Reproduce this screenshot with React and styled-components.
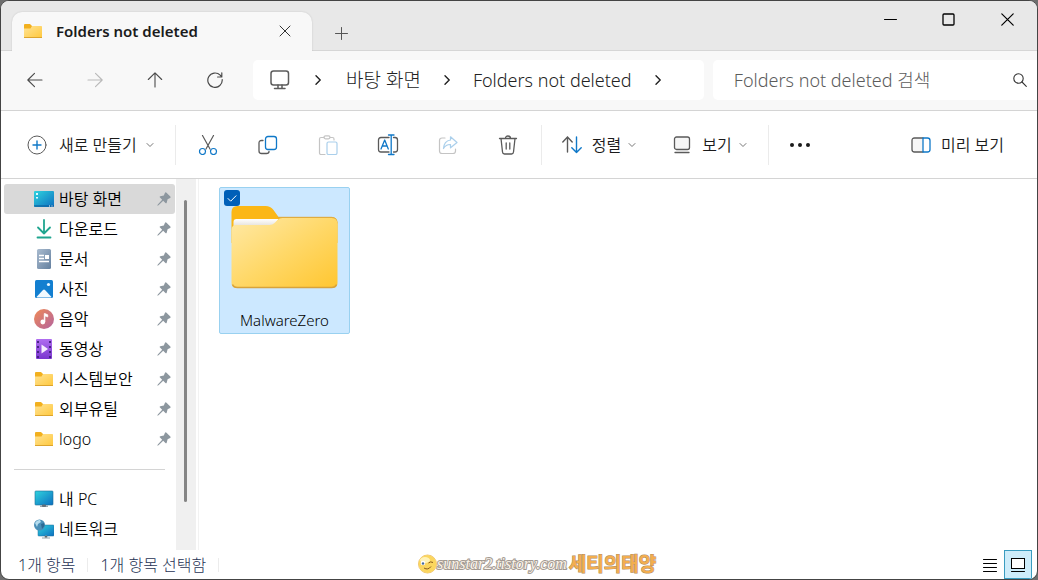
import { useState } from 'react'
import styled, { createGlobalStyle, css } from 'styled-components'

const GlobalStyle = createGlobalStyle`
    * {
        box-sizing: border-box;
    }

    body {
        margin: 0;
        background: #6e6e6e;
        color: #1b1b1b;
        font-family: 'Noto Sans', 'Noto Sans CJK KR', sans-serif;
        font-size: 15px;
        line-height: 20px;
    }

    button, input {
        font: inherit;
        color: inherit;
    }

    button {
        border: 0;
        padding: 0;
        background: none;
    }

    svg {
        display: block;
        flex: none;
    }
`

const Window = styled.div`
    display: flex;
    flex-direction: column;
    min-height: 100vh;
    border: 1px solid #444;
    border-radius: 9px;
    overflow: hidden;
    background: #fff;
`

/* title bar */

const TitleBar = styled.header`
    display: flex;
    align-items: stretch;
    height: 50px;
    padding-left: 11px;
    background: #e8e8e8;
    box-shadow: inset 0 -1px #d6d6d6;
`

const Tab = styled.div`
    display: flex;
    align-items: center;
    width: 300px;
    height: 39px;
    margin-top: 11px;
    padding: 0 18px 2px 11px;
    border-radius: 10px 10px 0 0;
    background: #f8f8f8;
    box-shadow: 0 0 2px rgba(0, 0, 0, 0.15);
    clip-path: inset(-2px -2px 0 -2px);
`

const TabTitle = styled.h1`
    flex: 1;
    margin: 0 0 0 13px;
    font-size: 15px;
    line-height: 20px;
    font-weight: 600;
`

const TitleButton = styled.button`
    display: grid;
    place-items: center;
    width: ${props => props.$width}px;
    height: 36px;
`

const NewTab = styled(TitleButton)`
    align-self: flex-end;
    margin-left: 11px;
`

const WindowButtons = styled.div`
    display: flex;
    margin-left: auto;
`

/* navigation bar */

const NavBar = styled.nav`
    display: flex;
    align-items: center;
    height: 60px;
    padding: 0 0 2px 4px;
    background: #f8f8f8;
    border-bottom: 1px solid #d4d4d4;
`

const NavButton = styled.button`
    display: grid;
    place-items: center;
    width: 60px;
    height: 40px;
    color: ${props => props.disabled ? '#b9b9b9' : '#4a4a4a'};
`

const Address = styled.div`
    display: flex;
    align-items: center;
    flex: 435 1 0;
    height: 40px;
    margin: 0 9px 0 8px;
    padding-left: 17px;
    border-radius: 5px;
    background: #fff;
    color: #222;
`

const Crumb = styled.a`
    color: inherit;
    text-decoration: none;
    font-size: ${props => props.$size || 18}px;
    line-height: 24px;
    font-weight: 300;
    white-space: nowrap;
`

const Chevron = styled.span`
    display: grid;
    place-items: center;
    width: ${props => props.$width || 52}px;
`

const Search = styled.label`
    display: flex;
    align-items: center;
    flex: 294 1 0;
    height: 40px;
    padding: 0 10px 0 21px;
    border-radius: 5px 0 0 5px;
    background: #fff;

    input {
        flex: 1;
        min-width: 0;
        padding: 0;
        border: 0;
        outline: 0;
        background: none;
        font-size: 18px;
        line-height: 24px;
        font-weight: 300;
    }

    input::placeholder {
        color: #5c5c5c;
        opacity: 1;
    }
`

/* command bar */

const CommandBar = styled.div`
    display: flex;
    align-items: center;
    height: 68px;
    padding: 0 33px 0 26px;
    border-bottom: 1px solid #d4d4d4;
`

const Command = styled.button`
    display: flex;
    align-items: center;
    gap: ${props => props.$gap || 10}px;
    height: 40px;
    font-weight: 350;
    white-space: nowrap;
    font-size: 16px;

    svg:last-child:not(:first-child) {
        margin-left: -3px;
    }
`

const IconCommand = styled.button`
    display: grid;
    place-items: center;
    width: 60px;
    height: 40px;
    opacity: ${props => props.disabled ? 0.35 : 1};
`

const Separator = styled.span`
    width: 1px;
    height: 40px;
    margin: ${props => props.$margin};
    background: #ebebeb;
`

const Spacer = styled.span`
    flex: 1;
`

const CommandGroup = styled.div`
    display: flex;
    gap: 36px;
`

/* body */

const Body = styled.div`
    display: flex;
    flex: 1;
`

const Sidebar = styled.aside`
    display: flex;
    width: 198px;
    border-right: 1px solid #f2f2f2;
`

const Places = styled.ul`
    flex: 1;
    margin: 0;
    padding: 5px 1px 5px 3px;
    list-style: none;
`

const Place = styled.a`
    display: flex;
    align-items: center;
    height: 30px;
    padding: 0 4px 0 30px;
    border-radius: 3px;
    color: #000;
    text-decoration: none;
    font-size: 16px;

    ${props => props.$selected && css`
        background: #d9d9d9;
    `}

    span {
        flex: 1;
        margin-left: 5px;
        font-weight: 350;
    }
`

const Divider = styled.li`
    height: 1px;
    margin: 15px 10px 14px;
    background: #d4d4d4;
`

const ScrollTrack = styled.div`
    width: 20px;
    margin-right: 2px;
    padding: 21px 0 48px 8px;
    background: #f0f0f0;
`

const ScrollThumb = styled.div`
    width: 3px;
    height: 100%;
    border-radius: 2px;
    background: #858585;
`

const Files = styled.main`
    flex: 1;
    padding: 8px 20px;
`

const Tile = styled.label`
    position: relative;
    display: flex;
    flex-direction: column;
    align-items: center;
    width: 131px;
    height: 147px;
    padding-top: 17px;
    border: 1px solid #99d1f0;
    border-radius: 2px;
    background: #cce8ff;
`

const TileName = styled.span`
    margin-top: 21px;
    font-size: 15px;
    font-weight: 350;
    color: #000;
`

const TileCheck = styled.span`
    position: absolute;
    top: 2px;
    left: 4px;
    display: grid;

    input {
        appearance: none;
        grid-area: 1 / 1;
        width: 16px;
        height: 16px;
        margin: 0;
        border-radius: 3px;
        background: #005fb8;
    }

    svg {
        grid-area: 1 / 1;
        pointer-events: none;
    }
`

/* status bar */

const StatusBar = styled.footer`
    position: relative;
    display: flex;
    align-items: center;
    height: 29px;
    padding: 0 5px 0 17px;
    color: #1f3354;
    font-size: 16px;
    font-weight: 300;
`

const StatusLine = styled.span`
    width: 1px;
    height: 14px;
    margin: 0 12px;
    background: #ececec;
`

const ViewButton = styled.button`
    display: grid;
    place-items: center;
    width: 28px;
    height: 29px;

    ${props => props.$active && css`
        border: 1px solid #3a9cc0;
        background: #cdecfa;
    `}
`

const Signature = styled.div`
    position: absolute;
    top: 4px;
    left: 416px;
    display: flex;
    align-items: center;
    height: 20px;
    white-space: nowrap;
    paint-order: stroke fill;
`

const SiteName = styled.em`
    font-family: 'Liberation Serif', serif;
    font-size: 16px;
    font-weight: 400;
    color: #fbf3e8;
    -webkit-text-stroke: 2px #a39a92;
`

const Nickname = styled.strong`
    margin-left: 2px;
    font-size: 19px;
    font-weight: 700;
    color: #f3ae4e;
    -webkit-text-stroke: 1px #b08a60;
`

/* icons */

function Stroke({ size = 20, width = 1, children, ...rest }) {
    return (
        <svg width={size} height={size} viewBox={`0 0 ${size} ${size}`} fill='none' stroke='currentColor'
            strokeWidth={width} strokeLinecap='round' strokeLinejoin='round' aria-hidden='true' {...rest}>
            {children}
        </svg>
    )
}

const GRAY = '#5a5a5a'
const BLUE = '#0f78c8'

const ChevronRight = () => <Stroke size={10} width={1.4}><path d='M3 .8 7.2 5 3 9.2' /></Stroke>
const ChevronDown = () => <Stroke size={8} stroke='#777'><path d='M1 2.500 4 5.500 7 2.500' /></Stroke>

function SmallFolder() {
    return (
        <svg width='20' height='20' viewBox='0 0 20 20' aria-hidden='true'>
            <defs>
                <linearGradient id='smallFolder' x1='0' y1='0' x2='1' y2='1'>
                    <stop offset='0' stopColor='#ffe395' />
                    <stop offset='1' stopColor='#ffc83c' />
                </linearGradient>
            </defs>
            <path d='M1 4a1 1 0 0 1 1-1h5l2 2v3H1z' fill='#f2b01e' />
            <path d='M1 7.500h6.500L9 5h9.200q.8 0 .8.8v10.400q0 .8-.8.8H1.800q-.8 0-.8-.8z' fill='url(#smallFolder)' />
            <path d='M1 16.500h18' stroke='#dca42e' />
        </svg>
    )
}

function LargeFolder() {
    return (
        <svg width='107' height='84' viewBox='0 0 106 84' aria-hidden='true'>
            <defs>
                <linearGradient id='folderFront' x1='0' y1='0' x2='1' y2='1'>
                    <stop offset='0' stopColor='#ffe9a6' />
                    <stop offset='.5' stopColor='#ffd868' />
                    <stop offset='1' stopColor='#ffc630' />
                </linearGradient>
                <linearGradient id='folderPaper' x1='0' y1='0' x2='0' y2='1'>
                    <stop offset='0' stopColor='#fff' />
                    <stop offset='1' stopColor='#ded9d0' />
                </linearGradient>
            </defs>
            <path d='M0 7q0-6 6-6h28q5 0 8 4l5 7h53q6 0 6 6v20H0z' fill='#fbb716' />
            <path d='M46 12.300h54q5.500 0 5.500 6' stroke='#d9a94c' fill='none' />
            <path d='M2 17q0-3 3-3h42l-6 9H2z' fill='url(#folderPaper)' />
            <path d='M0 25q0-5 5-5h33q3 0 5-2l3-3q2-2 5-2h49q6 0 6 6v59q0 5-6 5H6q-6 0-6-5z' fill='url(#folderFront)' />
            <path d='M1 79.500q1 3 5 3h94q4 0 5-3' stroke='#d8a33b' strokeWidth='1.500' fill='none' />
        </svg>
    )
}

const Monitor = ({ children }) => (
    <svg width='20' height='20' viewBox='0 0 20 20' aria-hidden='true'>
        <defs>
            <linearGradient id='screen' x1='0' y1='0' x2='1' y2='1'>
                <stop offset='0' stopColor='#2fd3de' />
                <stop offset='1' stopColor='#0d6fc0' />
            </linearGradient>
        </defs>
        {children}
    </svg>
)

const placeIcons = {
    desktop: (
        <Monitor>
            <rect x='0' y='2' width='20' height='16' rx='1' fill='url(#screen)' />
            <path d='M2 4h2v2H2zM2 8h2v1.500H2z' fill='#dffbff' />
            <path d='M0 16h20v1q0 1-1 1H1q-1 0-1-1z' fill='#0b5f9c' opacity='.6' />
            <path d='M15 17h1M17.500 17h1' stroke='#fff' />
        </Monitor>
    ),
    downloads: (
        <Stroke width={1.8} stroke='#1fa58f'>
            <path d='M10 1v13.500M4 8.500l6 6 6-6M3.500 18.500h13' />
        </Stroke>
    ),
    documents: (
        <svg width='20' height='20' viewBox='0 0 20 20' aria-hidden='true'>
            <defs>
                <linearGradient id='doc' x1='0' y1='0' x2='1' y2='1'>
                    <stop offset='0' stopColor='#a9bbcf' />
                    <stop offset='1' stopColor='#64809f' />
                </linearGradient>
            </defs>
            <rect x='3' y='0' width='14' height='20' rx='1.500' fill='url(#doc)' />
            <path d='M5 6.500h5M5 9.500h5M5 12.500h10' stroke='#fff' strokeWidth='1.300' />
            <path d='M11 6h4v4h-4z' fill='#fff' />
        </svg>
    ),
    pictures: (
        <svg width='20' height='20' viewBox='0 0 20 20' aria-hidden='true'>
            <rect x='1' y='1' width='18' height='18' rx='1.500' fill='#137fd0' />
            <path d='M2.500 18 9 11q1-1 2 0l6.500 7q-.5.500-1 .5h-13q-.5 0-1-.5z' fill='#f2faff' />
            <circle cx='14.500' cy='5.500' r='1.600' fill='#e9f7ff' />
        </svg>
    ),
    music: (
        <svg width='20' height='20' viewBox='0 0 20 20' aria-hidden='true'>
            <defs>
                <linearGradient id='disc' x1='0' y1='0' x2='1' y2='1'>
                    <stop offset='0' stopColor='#f08a55' />
                    <stop offset='1' stopColor='#b3639f' />
                </linearGradient>
            </defs>
            <circle cx='10' cy='10' r='10' fill='url(#disc)' />
            <circle cx='8.800' cy='13' r='2.400' fill='#fff' />
            <path d='M10.200 13V4.500h.8l2.800 1.300V8L11 7v6z' fill='#fff' stroke='#fff' strokeWidth='.6' />
        </svg>
    ),
    videos: (
        <svg width='20' height='20' viewBox='0 0 20 20' aria-hidden='true'>
            <defs>
                <linearGradient id='film' x1='0' y1='0' x2='0' y2='1'>
                    <stop offset='0' stopColor='#b06df0' />
                    <stop offset='1' stopColor='#7a36cf' />
                </linearGradient>
            </defs>
            <rect x='2' y='0' width='16' height='20' rx='1' fill='url(#film)' />
            <path d='M4 2v17M16 2v17' stroke='#40207c' strokeWidth='1.800' strokeDasharray='2 3' />
            <path d='m7.500 5.500 6.500 4.500-6.500 4.500z' fill='#f6ecff' />
        </svg>
    ),
    folder: <SmallFolder />,
    pc: (
        <Monitor>
            <rect x='1' y='2' width='18' height='14' rx='.8' fill='url(#screen)' stroke='#1c6d98' strokeWidth='.6' />
            <path d='M8.500 16h3v1.500h-3zM6 17.200h8' fill='#65727a' stroke='#65727a' strokeWidth='.9' />
        </Monitor>
    ),
    network: (
        <Monitor>
            <rect x='4' y='6' width='16' height='11' rx='.8' fill='url(#screen)' stroke='#1c6d98' strokeWidth='.5' />
            <path d='M11 17h2v1.500h-2zM8 19h8' stroke='#8a979e' strokeWidth='.9' />
            <circle cx='5.500' cy='6' r='5.500' fill='#4a8fb8' />
            <path d='M1 4q2-3.500 5-3l1 2-3 2-1 3z' fill='#b5dcee' />
            <path d='M7 5l3-1 .5 3L8 10z' fill='#2b6a94' />
        </Monitor>
    ),
}

const Pin = () => (
    <svg width='14' height='14' viewBox='0 0 14 14' aria-hidden='true'>
        <path d='M8 .7q.7-.7 1.500 0l3.800 3.800q.8.900-.2 1.400L10.600 7.200l-.9 3.500q-.4 1.100-1.300.3L6.200 8.800 1.500 13.200l-1.300.600.600-1.300L5.200 7.800 3 5.600q-.8-.9.300-1.300l3.500-.9z' fill='#8d979f' />
    </svg>
)

const places = [
    { name: '바탕 화면', icon: 'desktop', pinned: true },
    { name: '다운로드', icon: 'downloads', pinned: true },
    { name: '문서', icon: 'documents', pinned: true },
    { name: '사진', icon: 'pictures', pinned: true },
    { name: '음악', icon: 'music', pinned: true },
    { name: '동영상', icon: 'videos', pinned: true },
    { name: '시스템보안', icon: 'folder', pinned: true },
    { name: '외부유틸', icon: 'folder', pinned: true },
    { name: 'logo', icon: 'folder', pinned: true },
    null,
    { name: '내 PC', icon: 'pc' },
    { name: '네트워크', icon: 'network' },
]

export default function App() {
    const [current, setCurrent] = useState('바탕 화면')
    const [checked, setChecked] = useState(true)

    return (
        <>
        <GlobalStyle />
        <Window>
            <TitleBar>
                <Tab>
                    <SmallFolder />
                    <TabTitle>Folders not deleted</TabTitle>
                    <TitleButton $width={18} aria-label='Close tab'>
                        <Stroke size={12} stroke='#333'><path d='m1 1 10 10M11 1 1 11' /></Stroke>
                    </TitleButton>
                </Tab>
                <NewTab $width={36} aria-label='New tab'>
                    <Stroke size={13} stroke='#555'><path d='M6.500.5v12M.5 6.500h12' /></Stroke>
                </NewTab>
                <WindowButtons>
                    <TitleButton $width={58} aria-label='Minimize'>
                        <Stroke size={13} stroke='#000'><path d='M.5 6.500h12' /></Stroke>
                    </TitleButton>
                    <TitleButton $width={58} aria-label='Maximize'>
                        <Stroke size={13} width={1.3} stroke='#000'><rect x='1' y='1' width='11' height='11' rx='1' /></Stroke>
                    </TitleButton>
                    <TitleButton $width={60} aria-label='Close'>
                        <Stroke size={13} width={1.2} stroke='#000'><path d='m.8.8 11.400 11.400M12.200.8.8 12.200' /></Stroke>
                    </TitleButton>
                </WindowButtons>
            </TitleBar>

            <NavBar>
                <NavButton aria-label='Back'>
                    <Stroke size={16} width={1.1}><path d='M15 8H1M7.500 1.300.8 8l6.700 6.700' /></Stroke>
                </NavButton>
                <NavButton aria-label='Forward' disabled>
                    <Stroke size={16} width={1.1}><path d='M1 8h14M8.500 1.300 15.200 8l-6.700 6.700' /></Stroke>
                </NavButton>
                <NavButton aria-label='Up'>
                    <Stroke size={16} width={1.1}><path d='M8 15V1M1.300 7.500 8 .8l6.700 6.700' /></Stroke>
                </NavButton>
                <NavButton aria-label='Refresh'>
                    <Stroke size={16} width={1.2}><path d='M15.200 7.500a7.200 7.200 0 1 1-2-4.300l1.300 1.500M14.800.8v4.200h-4.200' /></Stroke>
                </NavButton>
                <Address>
                    <Stroke width={1.5} stroke='#5c5c5c'>
                        <rect x='1' y='1' width='17.500' height='14' rx='2.500' />
                        <path d='M8 15v3M12 15v3M4.500 18.500h10.500' />
                    </Stroke>
                    <Chevron $width={56}><ChevronRight /></Chevron>
                    <Crumb href='#desktop' $size={19}>바탕 화면</Crumb>
                    <Chevron><ChevronRight /></Chevron>
                    <Crumb href='#folder'>Folders not deleted</Crumb>
                    <Chevron><ChevronRight /></Chevron>
                </Address>
                <Search>
                    <input type='text' placeholder='Folders not deleted 검색' aria-label='검색' />
                    <Stroke size={14} width={1.1} stroke='#333'><circle cx='5.500' cy='5.500' r='4.700' /><path d='m9 9 4.300 4.300' /></Stroke>
                </Search>
            </NavBar>

            <CommandBar>
                <Command $gap={12}>
                    <Stroke stroke={GRAY}>
                        <circle cx='10' cy='10' r='9' />
                        <path d='M10 6v8M6 10h8' stroke={BLUE} strokeWidth='1.400' />
                    </Stroke>
                    새로 만들기
                    <ChevronDown />
                </Command>
                <Separator $margin='0 2px 0 21px' />
                <IconCommand aria-label='잘라내기'>
                    <Stroke width={1.2} stroke={GRAY}>
                        <path d='M4.500.5 12 14M15.500.5 8 14' />
                        <circle cx='4.500' cy='16.500' r='3' stroke={BLUE} />
                        <circle cx='15.500' cy='16.500' r='3' stroke={BLUE} />
                    </Stroke>
                </IconCommand>
                <IconCommand aria-label='복사'>
                    <Stroke width={1.3} stroke={GRAY}>
                        <path d='M5 5.500H3.500q-2.500 0-2.500 2.500v8q0 2.500 2.500 2.500h5q2.500 0 2.500-2' />
                        <rect x='7.500' y='1.500' width='11' height='13' rx='2.500' stroke={BLUE} />
                    </Stroke>
                </IconCommand>
                <IconCommand aria-label='붙여넣기' disabled>
                    <Stroke width={1.2} stroke={GRAY}>
                        <path d='M6 2.500H3q-1.500 0-1.500 1.500v14q0 1.500 1.500 1.500h4M12 2.500h2.500Q16 2.500 16 4v1' />
                        <rect x='6' y='.8' width='6' height='3' rx='1.500' />
                        <rect x='9' y='7' width='10' height='12.500' rx='1.500' stroke={BLUE} />
                    </Stroke>
                </IconCommand>
                <IconCommand aria-label='이름 바꾸기'>
                    <Stroke size={22} width={1.3} stroke={GRAY}>
                        <path d='M12 3.500H4Q1.500 3.500 1.500 6v9.500Q1.500 18 4 18h8M16.500 3.500H18q2.500 0 2.500 2.500v9.500q0 2.500-2.500 2.500h-1.500' />
                        <path d='m4 15 3.700-9 3.600 9M5.200 12h5M14.200 1.500v18.500M11.500 1h5.500M11.500 20.500h5.500' stroke={BLUE} />
                    </Stroke>
                </IconCommand>
                <IconCommand aria-label='공유' disabled>
                    <Stroke width={1.2} stroke={GRAY}>
                        <path d='M7 3H4Q1.500 3 1.500 5.500v10.500Q1.500 18.500 4 18.500h11q2.500 0 2.500-2.500v-2' />
                        <path d='M12.500 1.800 19 7.500l-6.500 5.300V9.500Q8 9.300 5.500 13.500 6 6 12.500 5z' stroke={BLUE} />
                    </Stroke>
                </IconCommand>
                <IconCommand aria-label='삭제'>
                    <Stroke width={1.3} stroke={GRAY}>
                        <path d='M1.500 3.500h17M7.500 3.500q0-2.500 2.500-2.500t2.500 2.500M3 3.500l1.500 13.500q.2 2 2 2h7q1.800 0 2-2L17 3.500M8.200 8v6M11.800 8v6' />
                    </Stroke>
                </IconCommand>
                <Separator $margin='0 20px 0 3px' />
                <CommandGroup>
                    <Command>
                        <Stroke width={1.4} stroke={GRAY}>
                            <path d='M5.500 17V2M.8 7 5.500 2l4.700 5' />
                            <path d='M14.500 2v15.500M9.800 12.800l4.700 4.700 4.700-4.700' stroke={BLUE} />
                        </Stroke>
                        정렬
                        <ChevronDown />
                    </Command>
                    <Command>
                        <Stroke width={1.3} stroke={GRAY}>
                            <rect x='2.500' y='2' width='15' height='12.500' rx='2' fill='#f6f6f6' />
                            <path d='M3 17.500h14' />
                        </Stroke>
                        보기
                        <ChevronDown />
                    </Command>
                </CommandGroup>
                <Separator $margin='0 1px 0 21px' />
                <IconCommand aria-label='더 보기'>
                    <svg width='20' height='20' viewBox='0 0 20 20' fill='#1b1b1b' aria-hidden='true'>
                        <circle cx='2' cy='10' r='2' /><circle cx='10' cy='10' r='2' /><circle cx='18' cy='10' r='2' />
                    </svg>
                </IconCommand>
                <Spacer />
                <Command>
                    <Stroke width={1.3} stroke={GRAY}>
                        <path d='M12 3H3.500Q1 3 1 5.500v9Q1 17 3.500 17H12' fill='#f6f6f6' />
                        <path d='M12 3h4.500Q19 3 19 5.500v9q0 2.500-2.500 2.500H12z' stroke={BLUE} />
                    </Stroke>
                    미리 보기
                </Command>
            </CommandBar>

            <Body>
                <Sidebar>
                    <Places>
                        {places.map((place, i) => place ? (
                            <li key={i}>
                                <Place href='#' $selected={place.name == current} onClick={() => setCurrent(place.name)}>
                                    {placeIcons[place.icon]}
                                    <span>{place.name}</span>
                                    {place.pinned && <Pin />}
                                </Place>
                            </li>
                        ) : <Divider key={i} />)}
                    </Places>
                    <ScrollTrack><ScrollThumb /></ScrollTrack>
                </Sidebar>

                <Files>
                    <Tile>
                        <TileCheck>
                            <input type='checkbox' checked={checked} onChange={() => setChecked(!checked)} />
                            {checked && <Stroke size={16} stroke='#fff'><path d='m4 8.500 2.700 2.700L12 5.800' /></Stroke>}
                        </TileCheck>
                        <LargeFolder />
                        <TileName>MalwareZero</TileName>
                    </Tile>
                </Files>
            </Body>

            <StatusBar>
                <span>1개 항목</span>
                <StatusLine />
                <span>1개 항목 선택함</span>
                <StatusLine />
                <Spacer />
                <ViewButton aria-label='자세히'>
                    <Stroke size={14} stroke='#000'><path d='M.5 1.500h13M.5 5.500h13M.5 9.500h13M.5 13.500h13' /></Stroke>
                </ViewButton>
                <ViewButton $active aria-label='큰 아이콘'>
                    <Stroke size={14} stroke='#000' strokeLinejoin='miter'><rect x='.5' y='.5' width='13' height='10' fill='#fff' /><path d='M.5 13.500h13' /></Stroke>
                </ViewButton>
                <Signature>
                    <svg width='20' height='20' viewBox='0 0 20 20' aria-hidden='true'>
                        <circle cx='10.500' cy='10' r='9' fill='#fbd65f' stroke='#e3a63e' strokeWidth='.7' />
                        <ellipse cx='8' cy='6' rx='5' ry='3' fill='#fff3b8' />
                        <circle cx='6' cy='9' r='2.300' fill='#fff' />
                        <circle cx='6' cy='9.500' r='1.200' fill='#456a9c' />
                        <path d='M11.500 9q2-2 4.500-.5M7 14q4 2.500 7-1.500' stroke='#8a5a1e' fill='none' />
                    </svg>
                    <SiteName>sunstar2.tistory.com</SiteName>
                    <Nickname>세티의태양</Nickname>
                </Signature>
            </StatusBar>
        </Window>
        </>
    )
}
